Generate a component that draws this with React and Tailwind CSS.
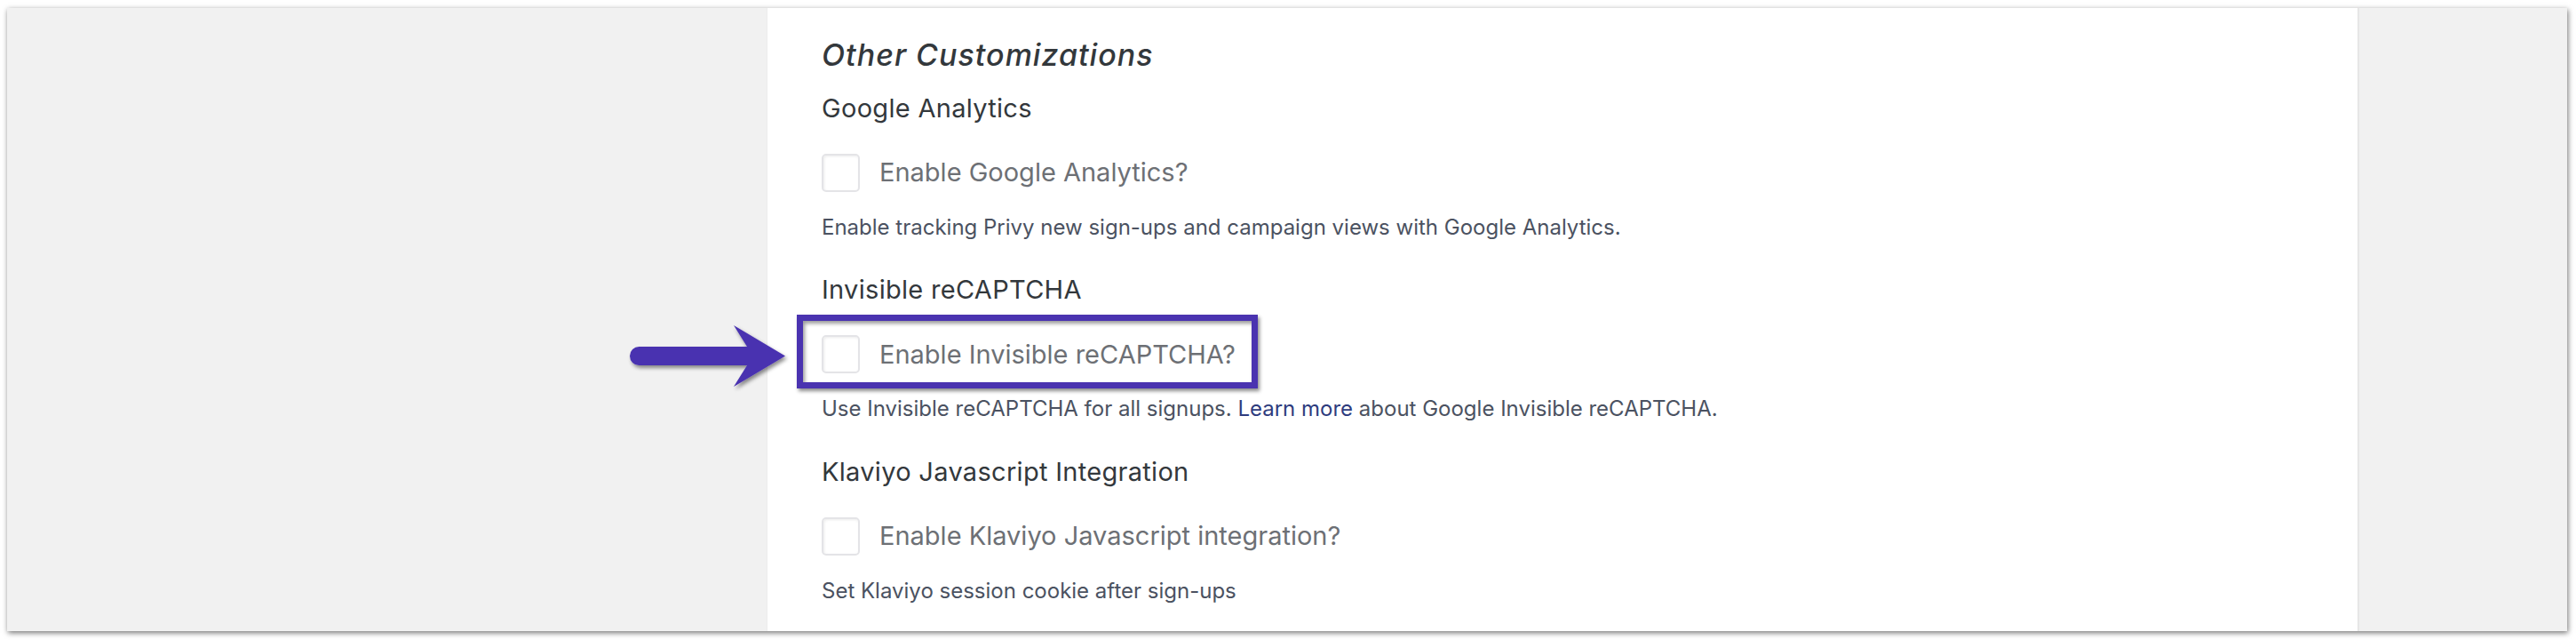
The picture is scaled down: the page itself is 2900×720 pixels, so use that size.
import React from "react";

function Checkbox() {
  return (
    <div className="w-[43px] h-[43px] shrink-0 rounded-[5px] border-2 border-[#e4e4e7] bg-white shadow-[inset_1px_1px_3px_rgba(0,0,0,0.08)]" />
  );
}

function CheckRow({ label, className = "" }) {
  return (
    <div className={"flex items-center gap-[22px] " + className}>
      <Checkbox />
      <span className="text-[29px] leading-[36px] text-[#6d7075]">{label}</span>
    </div>
  );
}

function SectionTitle({ children, className = "" }) {
  return (
    <h3 className={"text-[29px] leading-[36px] font-normal tracking-[0.3px] text-[#33383c] " + className}>
      {children}
    </h3>
  );
}

function Help({ children, className = "" }) {
  return (
    <p className={"text-[24px] leading-[30px] text-[#4b5261] " + className}>{children}</p>
  );
}

export default function App() {
  return (
    <div className="relative w-[2900px] h-[720px] bg-white font-['Inter',sans-serif] overflow-hidden">
      <div className="pl-[8px] pt-[9px]">
        <div className="flex w-[2882px] h-[701px] overflow-hidden shadow-[1px_2px_6px_rgba(0,0,0,0.55)]">
          <div className="w-[855px] shrink-0 bg-[#f1f1f1]" />
          <div className="w-[1793px] shrink-0 bg-white border-l border-[#ececec] border-r-2 border-r-[#e6e6e6] pl-[61px] pt-[33px] flex flex-col">
            <h2 className="text-[34px] leading-[40px] italic font-medium tracking-[1px] text-[#33383c]">
              Other Customizations
            </h2>

            <SectionTitle className="mt-[21.5px]">Google Analytics</SectionTitle>
            <CheckRow className="mt-[33px]" label="Enable Google Analytics?" />
            <Help className="mt-[25px]">
              Enable tracking Privy new sign-ups and campaign views with Google Analytics.
            </Help>

            <SectionTitle className="mt-[37.5px]">Invisible reCAPTCHA</SectionTitle>
            <CheckRow className="mt-[33px]" label="Enable Invisible reCAPTCHA?" />
            <Help className="mt-[25px]">
              Use Invisible reCAPTCHA for all signups.{" "}
              <a className="text-[#2e3c7e]">Learn more</a> about Google Invisible reCAPTCHA.
            </Help>

            <SectionTitle className="mt-[37.5px]">Klaviyo Javascript Integration</SectionTitle>
            <CheckRow className="mt-[33px]" label="Enable Klaviyo Javascript integration?" />
            <Help className="mt-[25px]">Set Klaviyo session cookie after sign-ups</Help>
          </div>
          <div className="flex-1 bg-[#f1f1f1]" />
        </div>
      </div>

      {/* annotation: highlight box */}
      <div className="absolute left-[897px] top-[354px] w-[519px] h-[83px] border-[7px] border-[#4a33b0] shadow-[2px_3px_4px_rgba(0,0,0,0.45),inset_2px_3px_4px_rgba(0,0,0,0.4)]" />

      {/* annotation: arrow */}
      <svg
        className="absolute left-[700px] top-[355px] overflow-visible"
        width="200"
        height="95"
        viewBox="0 0 200 95"
      >
        <defs>
          <filter id="arrowShadow" x="-20%" y="-30%" width="140%" height="160%">
            <feDropShadow dx="2" dy="3" stdDeviation="2" floodColor="#000" floodOpacity="0.45" />
          </filter>
        </defs>
        <path
          d="M19.5 35 L141 35 L126 11 L184 45.5 L126 80 L141 56 L19.5 56 A10.5 10.5 0 0 1 19.5 35 Z"
          fill="#4a33b0"
          filter="url(#arrowShadow)"
        />
      </svg>
    </div>
  );
}
